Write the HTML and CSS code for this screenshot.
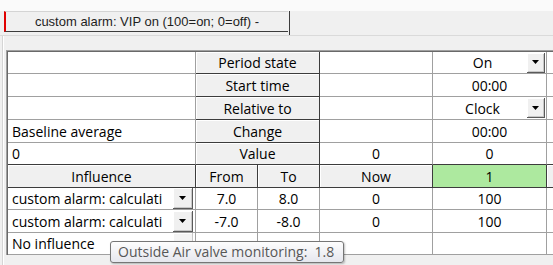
FILE: index.html
```html
<!DOCTYPE html>
<html lang="en">
<head>
<meta charset="UTF-8">
<title>Schedule influence</title>
<link rel="stylesheet" href="styles.css">
</head>
<body>

<div class="tabbar">
  <div class="tab-wrap">
    <div class="tab">custom alarm: VIP on (100=on; 0=off) -</div>
  </div>
</div>

<div class="panel">
  <div class="sheet">
    <div class="grid">
      <!-- period rows -->
      <div class="cell"></div>
      <div class="cell head wide">Period state</div>
      <div class="cell"></div>
      <div class="cell combo"><span class="txt">On</span><span class="drop"><svg width="7" height="4"><path d="M0 0h7L3.5 4z"/></svg></span></div>
      <div class="cell"></div>

      <div class="cell"></div>
      <div class="cell head wide">Start time</div>
      <div class="cell"></div>
      <div class="cell">00:00</div>
      <div class="cell"></div>

      <div class="cell"></div>
      <div class="cell head wide">Relative to</div>
      <div class="cell"></div>
      <div class="cell combo"><span class="txt">Clock</span><span class="drop"><svg width="7" height="4"><path d="M0 0h7L3.5 4z"/></svg></span></div>
      <div class="cell"></div>

      <div class="cell left">Baseline average</div>
      <div class="cell head wide">Change</div>
      <div class="cell"></div>
      <div class="cell">00:00</div>
      <div class="cell"></div>

      <div class="cell left rule">0</div>
      <div class="cell head wide">Value</div>
      <div class="cell rule">0</div>
      <div class="cell rule">0</div>
      <div class="cell rule"></div>

      <!-- influence header -->
      <div class="cell head">Influence</div>
      <div class="cell head">From</div>
      <div class="cell head">To</div>
      <div class="cell head">Now</div>
      <div class="cell head sel">1</div>
      <div class="cell head"></div>

      <!-- influences -->
      <div class="cell pick"><span class="txt">custom alarm: calculati</span><span class="drop"><svg width="7" height="4"><path d="M0 0h7L3.5 4z"/></svg></span></div>
      <div class="cell">7.0</div>
      <div class="cell">8.0</div>
      <div class="cell">0</div>
      <div class="cell">100</div>
      <div class="cell"></div>

      <div class="cell pick"><span class="txt">custom alarm: calculati</span><span class="drop"><svg width="7" height="4"><path d="M0 0h7L3.5 4z"/></svg></span></div>
      <div class="cell">-7.0</div>
      <div class="cell">-8.0</div>
      <div class="cell">0</div>
      <div class="cell">100</div>
      <div class="cell"></div>

      <div class="cell pick"><span class="txt">No influence</span><span class="drop off"></span></div>
      <div class="cell"></div>
      <div class="cell"></div>
      <div class="cell"></div>
      <div class="cell"></div>
      <div class="cell"></div>
    </div>
  </div>
</div>

<div class="tooltip">Outside Air valve monitoring:&nbsp; 1.8</div>

</body>
</html>
```

FILE: styles.css
```css
body {
  margin: 0;
  width: 553px;
  height: 265px;
  overflow: hidden;
  position: relative;
  background: #f0f0f0;
  color: #000;
  font-family: "Open Sans", sans-serif;
  font-size: 14px;
}

.tabbar {
  display: flex;
  box-sizing: border-box;
  height: 36px;
  padding-top: 11px;
  background: linear-gradient(#fafafa 11px, #f0f0f0 11px);
  border-bottom: 1px solid #dadada;
}

.tab-wrap {
  margin-left: 4px;
  width: 285px;
  height: 24px;
  border-right: 1px solid #3c3c3c;
}

.tab {
  height: 19px;
  line-height: 19px;
  border-top: 1px solid #d4d4d4;
  border-bottom: 1px solid #3c3c3c;
  border-left: 2px solid #e00000;
  margin-right: 1px;
  text-align: center;
  font-family: "Liberation Sans", Arial, sans-serif;
  font-size: 13px;
  color: #1e1e1e;
}

.panel {
  box-sizing: border-box;
  margin-left: 2px;
  padding: 14px 0 0 3px;
  height: 229px;
  overflow: hidden;
  border-left: 1px solid #d5d5d5;
  box-shadow: inset 1px 0 #fff;
}

.sheet {
  width: max-content;
  border-top: 1px solid #a0a0a0;
  border-left: 1px solid #a0a0a0;
}

.grid {
  display: grid;
  grid-template-columns: 188px 62px 62px 113px 114px 40px;
  grid-template-rows: 22px 23px 23px 23px 22px 23px 22px 23px 22px;
  border-top: 1px solid #696969;
  border-left: 1px solid #696969;
}

.cell {
  display: flex;
  align-items: center;
  justify-content: center;
  min-width: 0;
  overflow: hidden;
  white-space: nowrap;
  background: #fff;
  border-right: 1px solid #a0a0a0;
  border-bottom: 1px solid #a0a0a0;
}

.left {
  justify-content: flex-start;
  padding-left: 4px;
}

.rule {
  border-bottom-color: #3c3c3c;
}

.head {
  background: #f0f0f0;
  border-color: #3c3c3c;
  box-shadow: inset 1px 1px #fff;
}

.wide {
  grid-column: span 2;
}

.sel {
  background: #ade99f;
  box-shadow: none;
}

.combo {
  padding-left: 5px;
}

.combo .txt {
  flex: 1;
  text-align: center;
}

.combo .drop {
  margin-right: 1px;
  height: 20px;
}

.pick {
  padding-left: 4px;
}

.pick .txt {
  flex: 1;
}

.pick .drop {
  width: 20px;
  height: 21px;
  margin: 0 2px 0 3px;
}

.drop {
  display: flex;
  align-items: center;
  justify-content: center;
  box-sizing: border-box;
  width: 18px;
  background: #f0f0f0;
  border-right: 1px solid #5a5a5a;
  border-bottom: 1px solid #5a5a5a;
  box-shadow: inset 1px 1px #fff, inset -1px -1px #c8c8c8;
}

.drop svg {
  fill: #000;
}

.drop.off {
  background: #f4f4f4;
  border-color: #c8c8c8;
  box-shadow: inset 1px 1px #fff;
}

.tooltip {
  position: absolute;
  left: 110px;
  top: 241px;
  height: 20px;
  line-height: 20px;
  padding: 0 9px 0 7px;
  border: 1px solid #767676;
  border-radius: 3px;
  background: linear-gradient(#fdfdfd, #e6e7ee);
  box-shadow: 1px 1px 2px rgba(0, 0, 0, 0.25);
  color: #575757;
  white-space: nowrap;
}
```
